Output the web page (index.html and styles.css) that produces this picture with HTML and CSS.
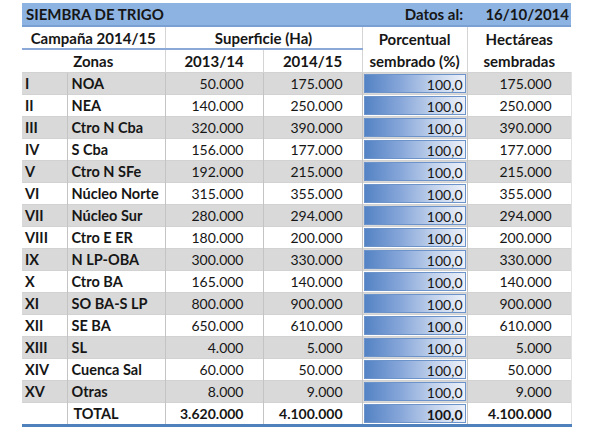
FILE: index.html
```html
<!DOCTYPE html>
<html lang="es">
<head>
<meta charset="utf-8">
<title>Siembra de trigo</title>
<link rel="stylesheet" href="styles.css">
</head>
<body>
<table class="tabla">
  <colgroup>
    <col class="c1"><col class="c2"><col class="c3"><col class="c4"><col class="c5"><col class="c6">
  </colgroup>
  <thead>
    <tr class="titulo">
      <th colspan="4" class="izq">SIEMBRA DE TRIGO</th>
      <th class="der">Datos al:</th>
      <th class="der fecha">16/10/2014</th>
    </tr>
    <tr class="cab1">
      <th colspan="2" class="subr">Campaña 2014/15</th>
      <th colspan="2" class="subr">Superficie (Ha)</th>
      <th rowspan="2" class="dos">Porcentual<br>sembrado (%)</th>
      <th rowspan="2" class="dos">Hectáreas<br>sembradas</th>
    </tr>
    <tr class="cab2">
      <th colspan="2">Zonas</th>
      <th>2013/14</th>
      <th>2014/15</th>
    </tr>
  </thead>
  <tbody>
    <tr class="gris"><td class="num">I</td><td class="zona">NOA</td><td class="val">50.000</td><td class="val">175.000</td><td class="pct"><div class="barra">100,0</div></td><td class="val">175.000</td></tr>
    <tr><td class="num">II</td><td class="zona">NEA</td><td class="val">140.000</td><td class="val">250.000</td><td class="pct"><div class="barra">100,0</div></td><td class="val">250.000</td></tr>
    <tr class="gris"><td class="num">III</td><td class="zona">Ctro N Cba</td><td class="val">320.000</td><td class="val">390.000</td><td class="pct"><div class="barra">100,0</div></td><td class="val">390.000</td></tr>
    <tr><td class="num">IV</td><td class="zona">S Cba</td><td class="val">156.000</td><td class="val">177.000</td><td class="pct"><div class="barra">100,0</div></td><td class="val">177.000</td></tr>
    <tr class="gris"><td class="num">V</td><td class="zona">Ctro N SFe</td><td class="val">192.000</td><td class="val">215.000</td><td class="pct"><div class="barra">100,0</div></td><td class="val">215.000</td></tr>
    <tr><td class="num">VI</td><td class="zona">Núcleo Norte</td><td class="val">315.000</td><td class="val">355.000</td><td class="pct"><div class="barra">100,0</div></td><td class="val">355.000</td></tr>
    <tr class="gris"><td class="num">VII</td><td class="zona">Núcleo Sur</td><td class="val">280.000</td><td class="val">294.000</td><td class="pct"><div class="barra">100,0</div></td><td class="val">294.000</td></tr>
    <tr><td class="num">VIII</td><td class="zona">Ctro E ER</td><td class="val">180.000</td><td class="val">200.000</td><td class="pct"><div class="barra">100,0</div></td><td class="val">200.000</td></tr>
    <tr class="gris"><td class="num">IX</td><td class="zona">N LP-OBA</td><td class="val">300.000</td><td class="val">330.000</td><td class="pct"><div class="barra">100,0</div></td><td class="val">330.000</td></tr>
    <tr><td class="num">X</td><td class="zona">Ctro BA</td><td class="val">165.000</td><td class="val">140.000</td><td class="pct"><div class="barra">100,0</div></td><td class="val">140.000</td></tr>
    <tr class="gris"><td class="num">XI</td><td class="zona">SO BA-S LP</td><td class="val">800.000</td><td class="val">900.000</td><td class="pct"><div class="barra">100,0</div></td><td class="val">900.000</td></tr>
    <tr><td class="num">XII</td><td class="zona">SE BA</td><td class="val">650.000</td><td class="val">610.000</td><td class="pct"><div class="barra">100,0</div></td><td class="val">610.000</td></tr>
    <tr class="gris"><td class="num">XIII</td><td class="zona">SL</td><td class="val">4.000</td><td class="val">5.000</td><td class="pct"><div class="barra">100,0</div></td><td class="val">5.000</td></tr>
    <tr><td class="num">XIV</td><td class="zona">Cuenca Sal</td><td class="val">60.000</td><td class="val">50.000</td><td class="pct"><div class="barra">100,0</div></td><td class="val">50.000</td></tr>
    <tr class="gris"><td class="num">XV</td><td class="zona">Otras</td><td class="val">8.000</td><td class="val">9.000</td><td class="pct"><div class="barra">100,0</div></td><td class="val">9.000</td></tr>
    <tr class="total"><td></td><td class="zona tot">TOTAL</td><td class="val">3.620.000</td><td class="val">4.100.000</td><td class="pct"><div class="barra">100,0</div></td><td class="val">4.100.000</td></tr>
  </tbody>
</table>
</body>
</html>
```
FILE: styles.css
```css
html, body {
  margin: 0;
  padding: 0;
  background: #ffffff;
}

body {
  font-family: Lato, "Open Sans", sans-serif;
  color: #161616;
}

.tabla {
  margin: 3px 0 0 22px;
  width: 549px;
  table-layout: fixed;
  border-collapse: collapse;
  font-size: 14px;
}

.c1 { width: 45px; }
.c2 { width: 98px; }
.c3 { width: 98px; }
.c4 { width: 99px; }
.c5 { width: 105px; }
.c6 { width: 104px; }

th, td {
  padding: 0;
  white-space: nowrap;
  overflow: hidden;
}

th {
  font-weight: 700;
  text-align: center;
  font-size: 15px;
}

.titulo th {
  height: 22px;
  background: #8db3e2;
  border-bottom: 2px solid #7a9fd3;
  font-size: 15px;
}

.titulo .izq {
  text-align: left;
  padding-left: 4px;
}

.titulo .der {
  text-align: right;
  padding-right: 4px;
}

.titulo .fecha {
  padding-right: 2px;
}

.cab1 th {
  height: 21px;
  border-left: 1px solid #d4d4d4;
}

.cab1 th:first-child {
  border-left: none;
}

.cab1 .subr {
  border-bottom: 2px solid #8aa9d6;
}

.cab1 .dos {
  line-height: 22px;
  vertical-align: middle;
}

.cab2 th {
  height: 22px;
  border-left: 1px solid #d4d4d4;
}

.cab2 th:first-child {
  border-left: none;
}

tbody tr {
  height: 21.8px;
}

tbody td {
  border-left: 1px solid #c4c4c4;
  border-top: 1px solid #d2d2d2;
  font-weight: 400;
}

tbody td:first-child {
  border-left: none;
}

tbody td:last-child {
  border-right: 1px solid #e2e2e2;
}

tbody tr.gris td {
  background: #d9d9d9;
}

.num, .zona {
  font-weight: 700;
  text-align: left;
  font-size: 14.5px;
}

.num {
  padding-left: 3px;
}

.zona {
  padding-left: 4px;
}

.zona.tot {
  padding-left: 6px;
}

.val {
  text-align: right;
  padding-right: 19px;
}

.pct {
  padding: 1px 1px 1px 1px;
  vertical-align: middle;
}

.barra {
  height: 19px;
  line-height: 19px;
  box-sizing: border-box;
  border: 1px solid #6d93cb;
  background: linear-gradient(to right, #5483c4 0%, #86a6d9 35%, #c3d3ec 70%, #edf1f9 100%);
  text-align: right;
  padding-right: 2px;
}

.total td {
  font-weight: 700;
  background: #ffffff;
  border-bottom: 3px solid #4f81bd;
}
```
